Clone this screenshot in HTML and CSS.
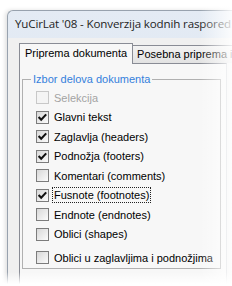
FILE: index.html
```
<!DOCTYPE html>
<html>
<head>
<meta charset="utf-8">
<link rel="stylesheet" href="styles.css">
</head>
<body>
<div class="window">
  <div class="titlebar">YuCirLat '08 - Konverzija kodnih raspored</div>
  <div class="client">
    <div class="tabs">
      <div class="tab active">Priprema dokumenta</div>
      <div class="tab">Posebna priprema i</div>
    </div>
    <div class="page">
      <fieldset class="group">
        <legend>Izbor delova dokumenta</legend>
        <div class="row disabled"><span class="box"></span><span class="lbl">Selekcija</span></div>
        <div class="row"><span class="box checked"><svg viewBox="0 0 13 13" width="13" height="13"><path d="M2.6 6 L5.2 8.8 L10.2 3.4" fill="none" stroke="#111" stroke-width="2.1"/></svg></span><span class="lbl">Glavni tekst</span></div>
        <div class="row"><span class="box checked"><svg viewBox="0 0 13 13" width="13" height="13"><path d="M2.6 6 L5.2 8.8 L10.2 3.4" fill="none" stroke="#111" stroke-width="2.1"/></svg></span><span class="lbl">Zaglavlja (headers)</span></div>
        <div class="row"><span class="box checked"><svg viewBox="0 0 13 13" width="13" height="13"><path d="M2.6 6 L5.2 8.8 L10.2 3.4" fill="none" stroke="#111" stroke-width="2.1"/></svg></span><span class="lbl">Podnožja (footers)</span></div>
        <div class="row"><span class="box"></span><span class="lbl">Komentari (comments)</span></div>
        <div class="row"><span class="box checked"><svg viewBox="0 0 13 13" width="13" height="13"><path d="M2.6 6 L5.2 8.8 L10.2 3.4" fill="none" stroke="#111" stroke-width="2.1"/></svg></span><span class="lbl focus">Fusnote (footnotes)</span></div>
        <div class="row"><span class="box"></span><span class="lbl">Endnote (endnotes)</span></div>
        <div class="row"><span class="box"></span><span class="lbl">Oblici (shapes)</span></div>
        <div class="row last"><span class="box"></span><span class="lbl">Oblici u zaglavljima i podnožjima</span></div>
      </fieldset>
    </div>
  </div>
</div>
<div class="fade"></div>
</body>
</html>
```
FILE: styles.css
```
html, body {
  margin: 0;
  padding: 0;
}
body {
  width: 232px;
  height: 286px;
  overflow: hidden;
  position: relative;
  background: #fff;
  font-family: "Liberation Sans", Arial, sans-serif;
  font-size: 11px;
  color: #000;
}
.window {
  margin: 10px 0 0 7px;
  width: 224px;
  height: 275px;
  overflow: hidden;
  border-top: 1px solid #98a2ae;
  border-left: 1px solid #98a2ae;
  border-top-left-radius: 6px;
  background: linear-gradient(#e4ebf4, #d6e1ed);
  box-shadow: -2px 0 4px rgba(0,0,0,0.12);
}
.titlebar {
  height: 27px;
  padding-left: 7px;
  box-sizing: border-box;
  font-family: "Open Sans", "Noto Sans", sans-serif;
  font-size: 11.6px;
  letter-spacing: -0.15px;
  line-height: 26px;
  white-space: nowrap;
  color: #1e1e1e;
}
.client {
  background: #f0f0f0;
  padding: 5px 0 0 11px;
  height: 248px;
  box-sizing: border-box;
}
.tabs {
  display: flex;
  align-items: flex-end;
  height: 20px;
  white-space: nowrap;
}
.tab {
  height: 17px;
  line-height: 16px;
  padding: 0 4px;
  border: 1px solid #898c95;
  border-bottom: none;
  border-left: none;
  background: linear-gradient(#f3f3f3, #e2e2e2);
}
.tab.active {
  height: 20px;
  line-height: 18px;
  padding: 0 5px;
  border-left: 1px solid #898c95;
  background: #f7f7f7;
  position: relative;
  z-index: 1;
  margin-bottom: -1px;
}
.page {
  border: 1px solid #898c95;
  border-right-color: #c8cbd0;
  background: #f7f7f7;
  width: 204px;
  height: 230px;
  padding: 0 0 0 2px;
}
.group {
  margin: 9px 0 0 0;
  padding: 0 0 0 8px;
  width: 189px;
  height: 194px;
  border: 1px solid #b0b0b0;
  border-radius: 0;
}
.group legend {
  padding: 0 2px;
  color: #3480dc;
  line-height: 13px;
}
.row {
  display: flex;
  align-items: center;
  height: 19.5px;
  padding-left: 5px;
  gap: 3px;
  white-space: nowrap;
}
.row:first-of-type {
  margin-top: 2px;
}
.row.last {
  margin-top: 4px;
}
.box {
  width: 13px;
  height: 13px;
  box-sizing: border-box;
  border: 1px solid #7c7c7c;
  background: linear-gradient(135deg, #d8d8d8, #fbfbfb);
  display: flex;
  align-items: center;
  justify-content: center;
}
.box svg {
  display: block;
  margin: -1px;
}
.disabled .box {
  border-color: #c8c8c8;
  background: #f4f4f4;
}
.disabled .lbl {
  color: #a3a3a3;
}
.lbl {
  padding: 1px 1px;
  border: 1px solid transparent;
}
.lbl.focus {
  border: 1px dotted #222;
}
.fade {
  position: absolute;
  left: 0;
  top: 0;
  width: 232px;
  height: 286px;
  pointer-events: none;
  background:
    linear-gradient(to right, rgba(255,255,255,0) 200px, rgba(255,255,255,0.85) 232px),
    linear-gradient(to bottom, rgba(255,255,255,0) 272px, rgba(255,255,255,1) 284px);
}
```
